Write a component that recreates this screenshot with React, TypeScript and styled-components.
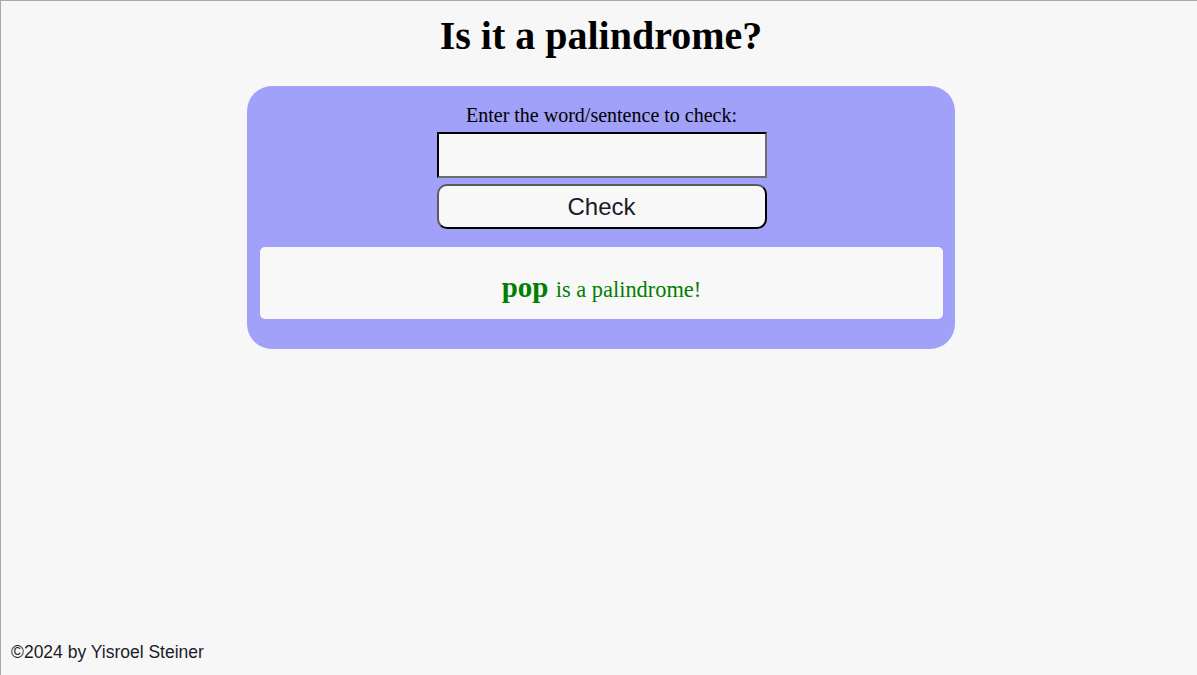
import React, { useState } from 'react';
import styled, { createGlobalStyle } from 'styled-components';

const GlobalStyle = createGlobalStyle`
  html, body {
    margin: 0;
    padding: 0;
    background: #f7f7f7;
  }
  body {
    font-family: "Liberation Serif", "Times New Roman", serif;
  }
`;

const Page = styled.div`
  min-height: 100vh;
  box-sizing: border-box;
  display: flex;
  flex-direction: column;
  border-top: 1px solid #a9a9a9;
  border-left: 1px solid #a9a9a9;
  padding-left: 4px;
`;

const Title = styled.h1`
  margin: 11px 0 27px;
  text-align: center;
  font-size: 40px;
  font-weight: bold;
  color: #000;
`;

const Card = styled.main`
  width: 708px;
  margin: 0 auto;
  box-sizing: border-box;
  padding: 18px 12px 30px 13px;
  background: #a1a1f9;
  border-radius: 25px;
  display: flex;
  flex-direction: column;
  align-items: center;
`;

const Label = styled.label`
  font-size: 20px;
  color: #000;
  margin-bottom: 5px;
`;

const Input = styled.input`
  width: 330px;
  height: 46px;
  box-sizing: border-box;
  border: 2px inset #767676;
  border-top-color: #1e1e1e;
  border-left-color: #1e1e1e;
  border-bottom-color: #6e6e6e;
  border-right-color: #6e6e6e;
  background: #f8f8f8;
  font-size: 20px;
  padding: 0 6px;
  outline: none;
`;

const Button = styled.button`
  margin-top: 6px;
  width: 330px;
  height: 45px;
  box-sizing: border-box;
  border: 2px solid #000;
  border-top-color: #5a5a5a;
  border-left-color: #5a5a5a;
  border-radius: 10px;
  background: #f8f8f8;
  font-family: "Liberation Sans", Arial, sans-serif;
  font-size: 24px;
  color: #1a1a2a;
  cursor: pointer;
`;

const Result = styled.div`
  align-self: stretch;
  margin-top: 18px;
  height: 72px;
  box-sizing: border-box;
  padding-top: 24px;
  background: #f8f8f8;
  border-radius: 5px;
  text-align: center;
  color: ${(p: { $ok: boolean }) => (p.$ok ? '#008000' : '#c00000')};
  font-size: 22.4px;
  line-height: 1.15;
`;

const Word = styled.strong`
  font-size: 29px;
`;

const Footer = styled.footer`
  margin-top: auto;
  padding: 0 0 12px 6px;
  font-family: "Liberation Sans", Arial, sans-serif;
  font-size: 17.5px;
  color: #1c1c28;
`;

const isPalindrome = (s: string) => {
  const clean = s.toLowerCase().replace(/[^a-z0-9]/g, '');
  return clean.length > 0 && clean === clean.split('').reverse().join('');
};

export default function App() {
  const [text, setText] = useState('');
  const [checked, setChecked] = useState('pop');
  const ok = isPalindrome(checked);

  return (
    <>
      <GlobalStyle />
      <Page>
        <Title>Is it a palindrome?</Title>
        <Card>
          <Label htmlFor="word">Enter the word/sentence to check:</Label>
          <Input id="word" value={text} onChange={(e) => setText(e.target.value)} />
          <Button onClick={() => text && setChecked(text)}>Check</Button>
          <Result $ok={ok}>
            <Word>{checked} </Word>
            {ok ? 'is a palindrome!' : 'is not a palindrome.'}
          </Result>
        </Card>
        <Footer>©2024 by Yisroel Steiner</Footer>
      </Page>
    </>
  );
}
